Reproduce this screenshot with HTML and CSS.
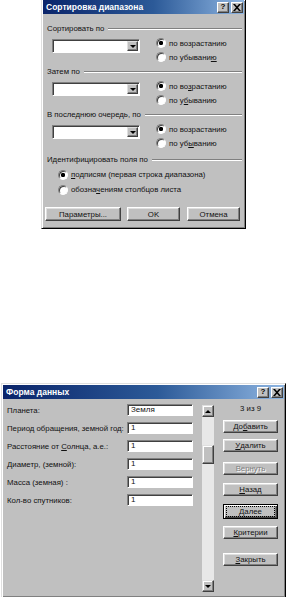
FILE: index.html
```html
<!DOCTYPE html>
<html lang="ru">
<head>
<meta charset="utf-8">
<title>Диалоги</title>
<link rel="stylesheet" href="styles.css">
</head>
<body>
<div class="page">
  <div class="dlg sort">
    <div class="title">
      <span class="ttext">Сортировка диапазона</span>
      <div class="tbtns">
        <span class="tb q">?</span>
        <span class="tb x"><svg width="8" height="7" viewBox="0 0 8 7"><path d="M0 0h2l2 2.2L6 0h2L5 3.5 8 7H6L4 4.8 2 7H0l3-3.5z" fill="#000"/></svg></span>
      </div>
    </div>
    <div class="sbody">
      <div class="group">
        <div class="glabel"><span>Сортировать по</span><i class="rule"></i></div>
        <div class="grow">
          <div class="combo"><div class="drop"><i class="tri"></i></div></div>
          <div class="radios">
            <div class="radio"><span class="rc on"></span><span>по возрастанию</span></div>
            <div class="radio"><span class="rc"></span><span>по убывани<u>ю</u></span></div>
          </div>
        </div>
      </div>
      <div class="group">
        <div class="glabel"><span>Затем по</span><i class="rule"></i></div>
        <div class="grow">
          <div class="combo"><div class="drop"><i class="tri"></i></div></div>
          <div class="radios">
            <div class="radio"><span class="rc on"></span><span>по во<u>з</u>растанию</span></div>
            <div class="radio"><span class="rc"></span><span>по у<u>б</u>ыванию</span></div>
          </div>
        </div>
      </div>
      <div class="group">
        <div class="glabel"><span>В последнюю очередь, по</span><i class="rule"></i></div>
        <div class="grow">
          <div class="combo"><div class="drop"><i class="tri"></i></div></div>
          <div class="radios">
            <div class="radio"><span class="rc on"></span><span>по возрастанию</span></div>
            <div class="radio"><span class="rc"></span><span>по уб<u>ы</u>ванию</span></div>
          </div>
        </div>
      </div>
      <div class="group last">
        <div class="glabel"><span>Идентифицировать поля по</span><i class="rule"></i></div>
        <div class="ident">
          <div class="radio tall"><span class="rc on"></span><span><u>п</u>одписям (первая строка диапазона)</span></div>
          <div class="radio tall"><span class="rc"></span><span>обозна<u>ч</u>ениям столбцов листа</span></div>
        </div>
      </div>
      <div class="brow">
        <div class="btn wide">Параметры...</div>
        <div class="btn">OK</div>
        <div class="btn">Отмена</div>
      </div>
    </div>
  </div>

  <div class="dlg form">
    <div class="title">
      <span class="ttext">Форма данных</span>
      <div class="tbtns">
        <span class="tb q">?</span>
        <span class="tb x"><svg width="8" height="7" viewBox="0 0 8 7"><path d="M0 0h2l2 2.2L6 0h2L5 3.5 8 7H6L4 4.8 2 7H0l3-3.5z" fill="#000"/></svg></span>
      </div>
    </div>
    <div class="fbody">
      <div class="fields">
        <div class="frow"><span>Планета:</span><div class="fld">Земля</div></div>
        <div class="frow"><span>Период обращения, земной год:</span><div class="fld">1</div></div>
        <div class="frow"><span>Расстояние от <u>С</u>олнца, а.е.:</span><div class="fld">1</div></div>
        <div class="frow"><span>Диаметр, (земной):</span><div class="fld">1</div></div>
        <div class="frow"><span>Масса (земная) :</span><div class="fld">1</div></div>
        <div class="frow"><span>Кол-во спутников:</span><div class="fld">1</div></div>
      </div>
      <div class="sbar">
        <div class="sarrow"><i class="tri up"></i></div>
        <div class="strack">
          <div class="thumb"></div>
        </div>
        <div class="sarrow"><i class="tri"></i></div>
      </div>
      <div class="fbtns">
        <div class="count">3 из 9</div>
        <div class="btn fb m4">До<u>б</u>авить</div>
        <div class="btn fb m6"><u>У</u>далить</div>
        <div class="btn fb m10 dis">Вернуть</div>
        <div class="btn fb m8"><u>Н</u>азад</div>
        <div class="btn fb m8 focus"><span class="dots"><u>Д</u>алее</span></div>
        <div class="btn fb m7"><u>К</u>ритерии</div>
        <div class="btn fb m14"><u>З</u>акрыть</div>
      </div>
    </div>
  </div>
</div>
</body>
</html>
```
FILE: styles.css
```css
* { box-sizing: border-box; margin: 0; padding: 0; }
html, body { background: #fff; }
body {
  width: 288px;
  height: 597px;
  overflow: hidden;
  font-family: "Liberation Sans", Arial, sans-serif;
  font-size: 7.8px;
  line-height: 11px;
  color: #111;
}
u { text-decoration: underline; text-underline-offset: 1px; }
.page { display: flex; flex-direction: column; align-items: flex-start; }

.dlg {
  background: #c0c0c0;
  border: 1px solid;
  border-color: #dfdfdf #000 #000 #dfdfdf;
  box-shadow: inset 1px 1px #fff, inset -1px -1px #808080;
  padding: 1px;
}
.sort {
  margin-left: 41px;
  width: 205px;
  border-top: 0;
  padding-top: 0;
}
.form {
  margin-top: 154px;
  margin-left: 1px;
  width: 285px;
  height: 215px;
}

.title {
  height: 14px;
  display: flex;
  align-items: center;
  justify-content: space-between;
  padding: 0 1px 0 3px;
  background: linear-gradient(90deg, #0a246a 0%, #2c5a98 55%, #8fb6e2 100%);
  color: #fff;
  font-size: 8.5px;
  font-weight: bold;
}
.tbtns { display: flex; gap: 2px; }
.tb {
  width: 12px;
  height: 11px;
  background: #c0c0c0;
  border: 1px solid;
  border-color: #fff #404040 #404040 #fff;
  box-shadow: inset -1px -1px #808080;
  color: #000;
  display: flex;
  align-items: center;
  justify-content: center;
  font-size: 8px;
  line-height: 8px;
  font-weight: bold;
}

/* sort dialog */
.sbody { padding: 9px 2px 6px 4px; display: flex; flex-direction: column; gap: 2px; }
.glabel { display: flex; align-items: center; height: 11px; white-space: nowrap; }
.rule {
  flex: 1;
  height: 2px;
  margin-left: 4px;
  border-top: 1px solid #808080;
  border-bottom: 1px solid #fff;
}
.grow { display: flex; align-items: flex-start; padding-left: 5px; margin-top: 2px; }
.combo {
  width: 88px;
  height: 14px;
  margin-top: 3px;
  background: #fff;
  border: 1px solid;
  border-color: #808080 #fff #fff #808080;
  box-shadow: inset 1px 1px #404040;
  display: flex;
  justify-content: flex-end;
  padding: 1px;
}
.drop {
  width: 11px;
  height: 100%;
  background: #c0c0c0;
  border: 1px solid;
  border-color: #dfdfdf #404040 #404040 #dfdfdf;
  box-shadow: inset -1px -1px #808080;
  display: flex;
  align-items: center;
  justify-content: center;
}
.tri {
  display: block;
  width: 0;
  height: 0;
  border-left: 3px solid transparent;
  border-right: 3px solid transparent;
  border-top: 3px solid #000;
}
.tri.up { border-top: 0; border-bottom: 3px solid #000; }
.radios { margin-left: 16px; display: flex; flex-direction: column; }
.radio { display: flex; align-items: center; height: 14px; white-space: nowrap; }
.radio.tall { height: 15px; }
.rc {
  width: 10px;
  height: 10px;
  border-radius: 50%;
  margin-right: 3px;
  background: #fff;
  border: 1px solid;
  border-color: #808080 #fff #fff #808080;
  box-shadow: inset 1px 1px #404040;
  flex: none;
}
.rc.on { background: radial-gradient(circle, #000 0 2px, #fff 2.3px); }
.ident { display: flex; flex-direction: column; padding-left: 11px; margin-top: 2px; }
.group.last { margin-top: 2px; }

.brow { display: flex; margin-top: 8px; margin-left: -2px; }
.btn {
  height: 14px;
  width: 53px;
  background: #c0c0c0;
  border: 1px solid;
  border-color: #fff #404040 #404040 #fff;
  box-shadow: inset -1px -1px #808080, inset 1px 1px #dfdfdf;
  display: flex;
  align-items: center;
  justify-content: center;
  white-space: nowrap;
}
.brow .btn + .btn { margin-left: 6px; }
.brow .btn:last-child { margin-left: 7px; }
.btn.wide { width: 76px; }

/* data form */
.fbody { display: flex; align-items: flex-start; padding: 2px 0 0 4px; }
.fields { width: 186px; display: flex; flex-direction: column; }
.frow { height: 18px; display: flex; align-items: center; justify-content: space-between; white-space: nowrap; }
.fld {
  width: 66px;
  height: 12px;
  background: #fff;
  border: 1px solid;
  border-color: #808080 #fff #fff #808080;
  box-shadow: inset 1px 1px #404040;
  padding-left: 3px;
  font-size: 8px;
  line-height: 10px;
}
.sbar {
  margin-left: 9px;
  margin-top: 4px;
  width: 12px;
  height: 187px;
  display: flex;
  flex-direction: column;
}
.sarrow {
  height: 12px;
  flex: none;
  background: #c0c0c0;
  border: 1px solid;
  border-color: #dfdfdf #404040 #404040 #dfdfdf;
  box-shadow: inset -1px -1px #808080, inset 1px 1px #fff;
  display: flex;
  align-items: center;
  justify-content: center;
}
.strack { flex: 1; background: #e8e8e8; padding-top: 28px; }
.thumb {
  height: 19px;
  background: #c0c0c0;
  border: 1px solid;
  border-color: #dfdfdf #404040 #404040 #dfdfdf;
  box-shadow: inset -1px -1px #808080, inset 1px 1px #fff;
}
.fbtns { margin-left: 9px; width: 55px; display: flex; flex-direction: column; }
.count { height: 15px; line-height: 15px; text-align: center; }
.btn.fb { width: 55px; height: 13px; }
.m4 { margin-top: 4px; }
.m6 { margin-top: 6px; }
.m7 { margin-top: 7px; }
.m8 { margin-top: 8px; }
.m10 { margin-top: 10px; }
.m14 { margin-top: 14px; }
.dis { color: #808080; text-shadow: 1px 1px 0 #fff; }
.btn.focus {
  height: 15px;
  border: 1px solid #000;
  box-shadow: inset 1px 1px #fff, inset -1px -1px #404040, inset -2px -2px #808080;
  padding: 1px 2px;
}
.dots {
  flex: 1;
  align-self: stretch;
  border: 1px dotted #000;
  display: flex;
  align-items: center;
  justify-content: center;
  line-height: 9px;
}
```
